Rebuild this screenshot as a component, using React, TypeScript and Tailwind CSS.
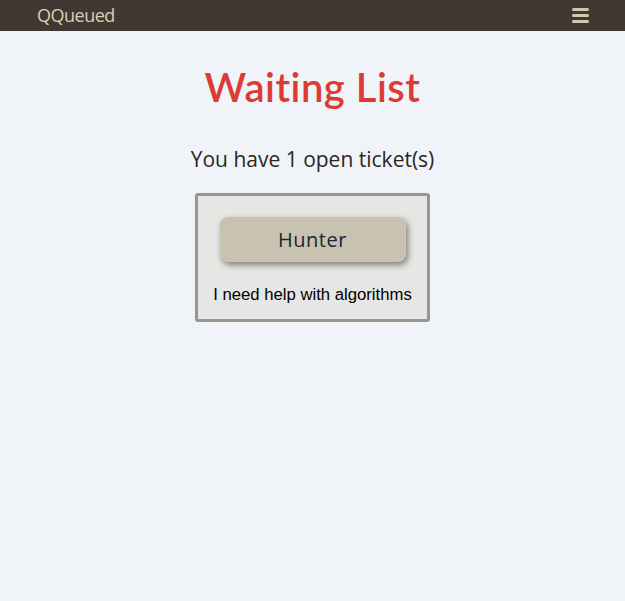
import React from "react";

const App: React.FC = () => {
  return (
    <div className="min-h-[601px] w-full bg-[#f0f4f8]">
      {/* Navbar */}
      <nav className="h-[31px] bg-[#413832] flex items-center justify-between pl-[37px] pr-[36px]">
        <span className="text-[#d6d0b6] text-[18px] font-['Open_Sans',sans-serif] tracking-[-0.5px]">QQueued</span>
        <div className="flex flex-col gap-[3px]">
          <span className="block w-[17px] h-[3px] bg-[#cfc9b2] rounded-sm"></span>
          <span className="block w-[17px] h-[3px] bg-[#cfc9b2] rounded-sm"></span>
          <span className="block w-[17px] h-[3px] bg-[#cfc9b2] rounded-sm"></span>
        </div>
      </nav>

      {/* Content */}
      <main className="flex flex-col items-center">
        <h1 className="mt-[32px] text-[#dc3b34] text-[40px] font-semibold leading-[48px] font-['Lato',sans-serif] tracking-[0.5px]">
          Waiting List
        </h1>
        <p className="mt-[36px] text-[#2b2620] text-[21px] leading-[24px] font-['Open_Sans',sans-serif]">
          You have 1 open ticket(s)
        </p>

        {/* Ticket card */}
        <div className="mt-[22px] w-[235px] h-[129px] border-[3px] border-[#9b958e] rounded-[3px] bg-[#e6e6e4] flex flex-col items-center">
          <button className="mt-[21px] w-[186px] h-[45px] rounded-[8px] bg-[#c8c3b0] text-[#1d2433] text-[20px] font-['Open_Sans',sans-serif] tracking-[0.5px] shadow-[2px_3px_6px_rgba(0,0,0,0.45)]">
            Hunter
          </button>
          <p className="mt-[23px] text-black text-[16.7px] leading-[19px] font-['Liberation_Sans',Arial,sans-serif]">
            I need help with algorithms
          </p>
        </div>
      </main>
    </div>
  );
};

export default App;
